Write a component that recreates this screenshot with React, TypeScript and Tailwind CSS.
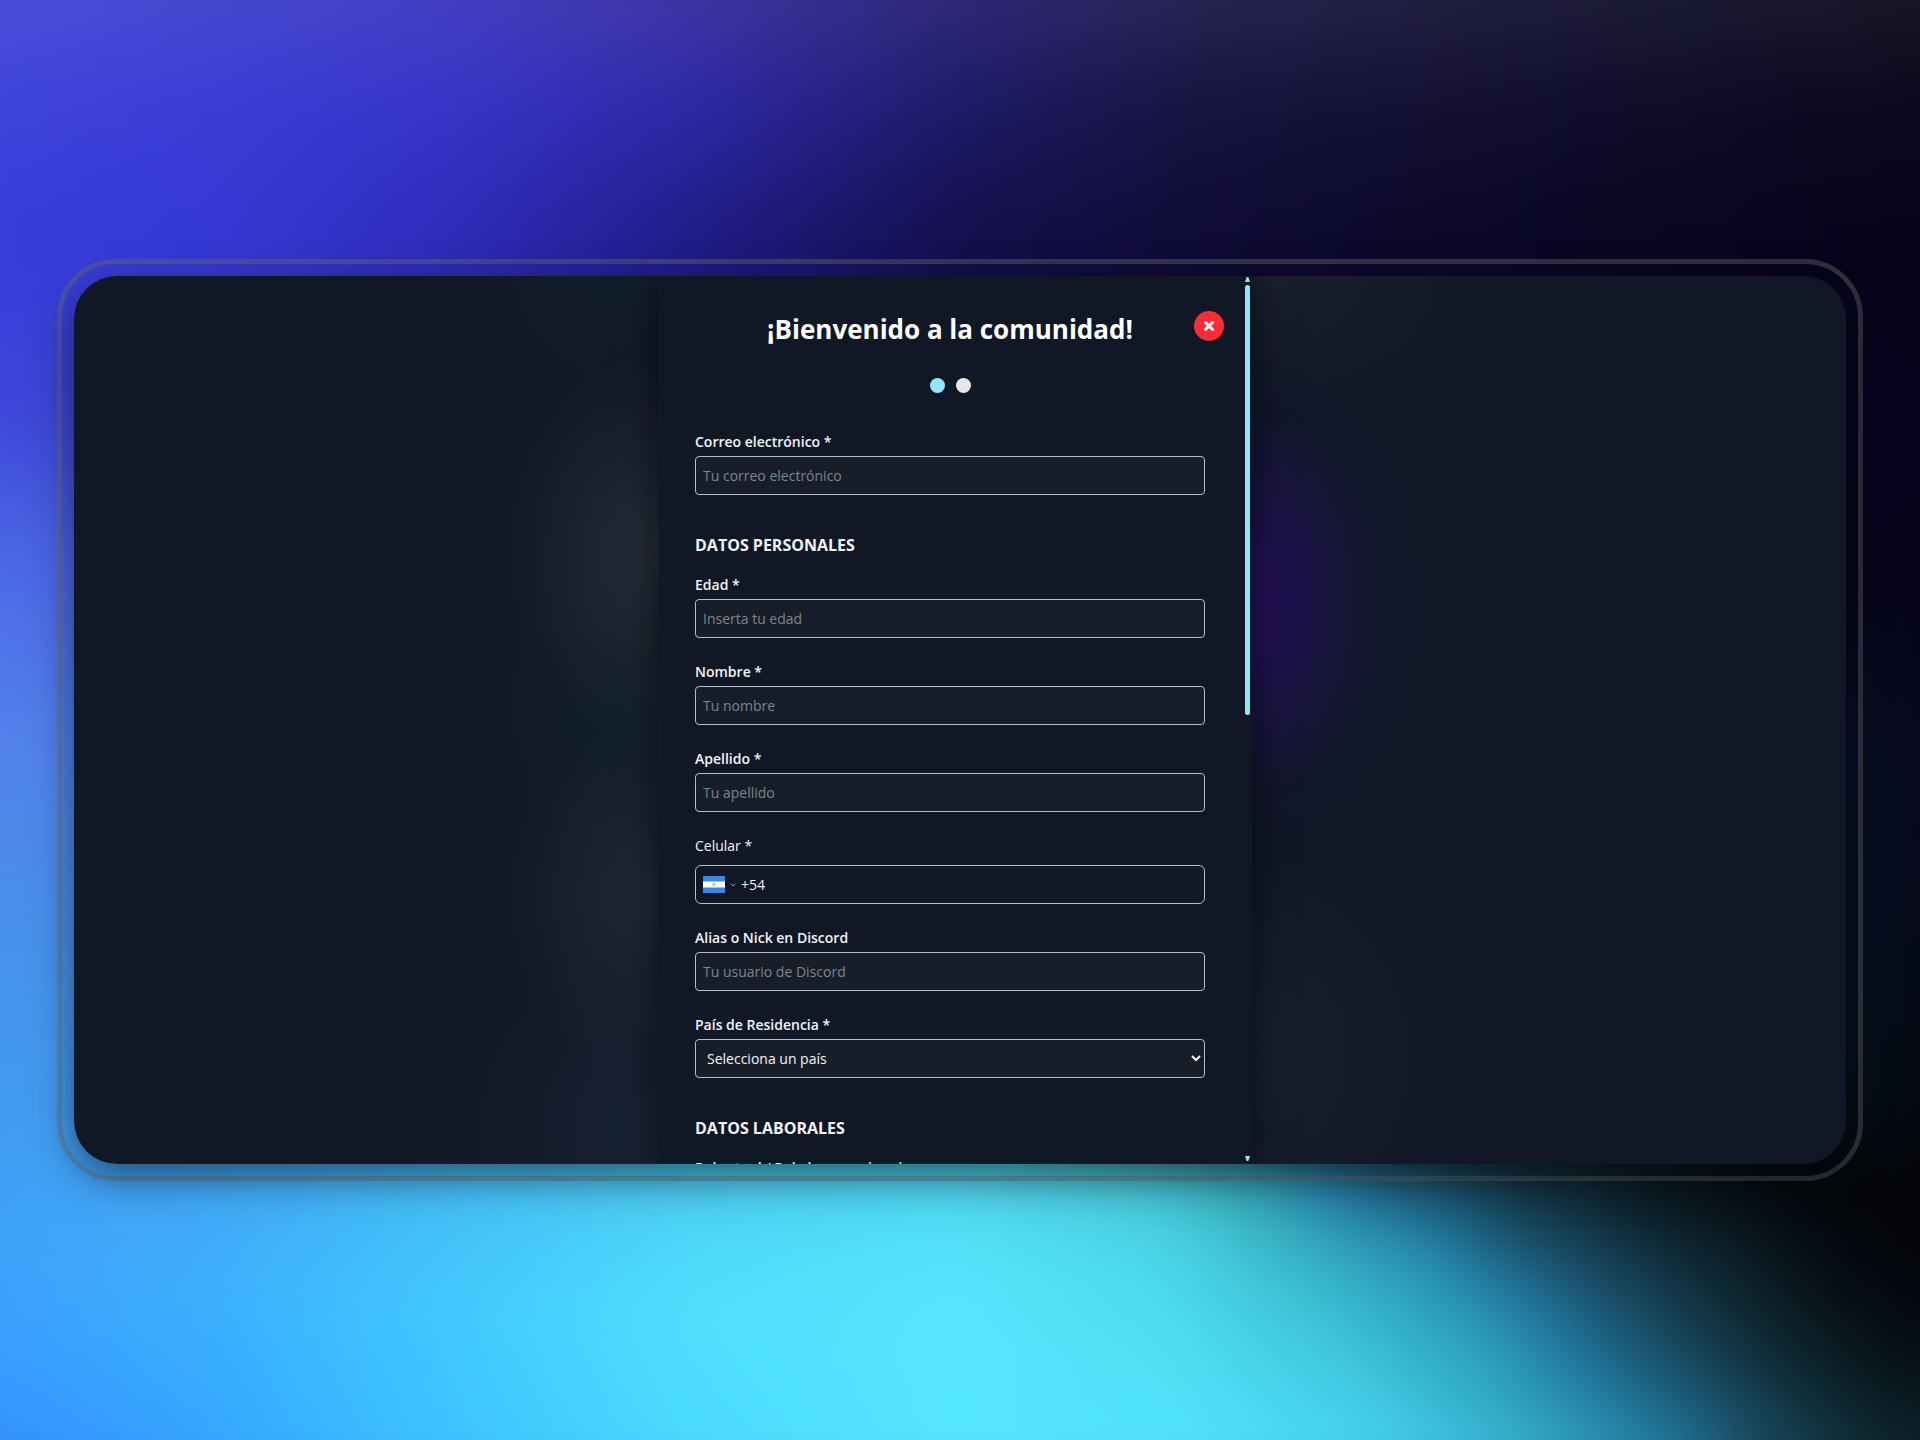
import React from "react";
import { ChevronDown, X } from "lucide-react";

type Band = { y: number; stops: string };

/* Horizontal colour bands of the wallpaper; each one fades in over the one above it. */
const bands: Band[] = [
  { y: 3, stops: "#4b50da 3%, #4648d0 14%, #4440c4 25%, #3f36a4 37%, #302979 50%, #292553 62%, #211f40 75%, #1b1a32 87%, #181727 97%" },
  { y: 10, stops: "#3f44db 3%, #3b3dd6 14%, #3735c9 25%, #2e29a6 37%, #1f1b68 50%, #17143f 62%, #131033 75%, #0e0c26 87%, #0b0a1d 97%" },
  { y: 19, stops: "#373ddb 3%, #3538d3 14%, #2e2bbb 25%, #1f1c85 37%, #140f4b 50%, #0f0b35 62%, #0b0828 75%, #080620 87%, #07051a 97%" },
  { y: 30, stops: "#3e4ae0 0%, #3a40c8 13%, #1f1c86 37%, #130f45 50%, #0b0828 75%, #06041c 100%" },
  { y: 40, stops: "#4f6cea 0%, #4860dc 13%, #1f1c86 37%, #0b0828 75%, #050318 100%" },
  { y: 52, stops: "#5585ee 0%, #4d7fe8 13%, #2c5aa0 50%, #050414 100%" },
  { y: 64, stops: "#4890ea 0%, #4893ea 13%, #2c6aa0 50%, #030310 100%" },
  { y: 76, stops: "#409aef 0%, #42a0f0 13%, #45bfe8 50%, #103040 75%, #030308 100%" },
  { y: 80, stops: "#3f9df8 0%, #42a8f5 14%, #45bdf2 25%, #4ccdf0 37%, #4fd2ea 50%, #45c2d0 59%, #33a4b1 64%, #2272a6 68%, #1a5169 72%, #112b38 78%, #081319 84%, #04060a 91%, #030306 99%" },
  { y: 84, stops: "#3f9ffb 0%, #40adfa 14%, #43c2fa 25%, #4dd8fa 37%, #54e3fa 50%, #49d4e6 60%, #35adbd 67%, #2582ae 73%, #1b5570 77%, #122f3e 83%, #09161d 89%, #04060c 94%, #030408 99%" },
  { y: 88, stops: "#3b9cfe 0%, #3db1fd 14%, #42c9fe 25%, #50dffe 37%, #57e6fd 50%, #4cdcf0 60%, #3abdd2 68%, #2ba2bb 73%, #247fac 77%, #1c5674 81%, #12333f 86%, #081319 92%, #04060c 98%" },
  { y: 92, stops: "#3798ff 0%, #38adff 14%, #3fc7ff 25%, #4eddff 37%, #57e7ff 50%, #50e1f6 60%, #40c8e0 69%, #2ca2bc 76%, #2379a5 80%, #1b5571 84%, #12323e 89%, #07141a 95%, #061016 99%" },
  { y: 97, stops: "#348fff 3%, #36a7ff 14%, #3dc3ff 25%, #4ad9ff 37%, #56e6ff 50%, #50e3fb 61%, #46d2ed 70%, #36b0cf 77%, #2a96b4 81%, #22739c 85%, #184b5e 89%, #102a34 94%, #0c2028 98%" },
];

function Wallpaper() {
  return (
    <div aria-hidden="true" className="absolute inset-0 scale-107 blur-xl">
      {bands.map((band, i) => {
        const fade =
          i === 0
            ? undefined
            : `linear-gradient(to bottom, transparent ${bands[i - 1].y}%, black ${band.y}%)`;
        return (
          <div
            key={band.y}
            className="absolute inset-0"
            style={{
              backgroundImage: `linear-gradient(to right, ${band.stops})`,
              maskImage: fade,
            }}
          />
        );
      })}
    </div>
  );
}

const boxClass =
  "block h-[39px] w-full rounded-[4px] border border-[#b8bcc3] px-[7px] text-[14px] text-gray-100 outline-none";

function Field({ id, label, placeholder, type = "text" }: { id: string; label: string; placeholder: string; type?: string }) {
  return (
    <div className="flex flex-col gap-1">
      <label htmlFor={id} className="text-[14px] leading-5 font-semibold">
        {label}
      </label>
      <input id={id} type={type} placeholder={placeholder} className={`${boxClass} bg-[#181e29] placeholder:text-[#7b848f]`} />
    </div>
  );
}

function Flag() {
  return (
    <svg viewBox="0 0 22 17" className="h-[17px] w-[22px] shrink-0" role="img" aria-label="Argentina">
      <rect width="22" height="17" fill="#3b86e6" />
      <rect y="5.5" width="22" height="6" fill="#fff" />
      <circle cx="11" cy="8.5" r="2" fill="#e8cf6a" />
    </svg>
  );
}

function ScrollRail() {
  return (
    <div aria-hidden="true" className="absolute top-0 right-[2px] bottom-0 flex w-[5px] flex-col items-center">
      <svg viewBox="0 0 6 6" className="mt-px h-[5px] w-[5px] shrink-0">
        <path d="M2 0h2L6 6H0z" fill="#93e6f8" />
      </svg>
      <div className="mt-[3px] h-[430px] w-full shrink-0 rounded-full bg-[#93e6f8]" />
      <svg viewBox="0 0 6 6" className="mt-auto mb-[3px] h-[5px] w-[5px] shrink-0">
        <path d="M0 0h6L4 6H2z" fill="#93e6e0" />
      </svg>
    </div>
  );
}

function SectionTitle({ children }: { children: React.ReactNode }) {
  return <h2 className="mt-3 -mb-2 text-[16px] leading-7 font-bold">{children}</h2>;
}

export default function App() {
  return (
    <main className="relative flex min-h-screen items-center overflow-hidden bg-[#07051a] px-[57px] font-['Open_Sans','Noto_Sans',sans-serif] text-[#f3f4f6]">
      <Wallpaper />
      <div className="relative w-full rounded-[58px] border-[5px] border-[#6e6e6e]/40 p-3">
        <div className="relative flex aspect-[1772/888] w-full justify-center overflow-hidden rounded-[43px] bg-linear-to-r from-[#111825] to-[#111727] pr-[10px] shadow-[0_14px_40px_rgba(0,0,0,0.5)]">
          <div
            aria-hidden="true"
            className="absolute inset-0 bg-[radial-gradient(150px_200px_at_580px_275px,#262d3a,transparent),radial-gradient(150px_190px_at_580px_620px,#222a38,transparent),radial-gradient(200px_190px_at_590px_850px,#182436,transparent),radial-gradient(190px_200px_at_590px_430px,#10202b,transparent),radial-gradient(190px_140px_at_590px_0px,#121f2c,transparent),radial-gradient(120px_190px_at_1165px_325px,#24105e,transparent),radial-gradient(190px_260px_at_1165px_325px,#17143c,transparent),radial-gradient(170px_200px_at_1190px_780px,#18202f,transparent),radial-gradient(200px_130px_at_1190px_0px,#19212d,transparent)]"
          />
          <section
            role="dialog"
            aria-labelledby="dialog-title"
            className="relative w-full max-w-[594px] overflow-hidden bg-[#101725] shadow-[0_0_36px_rgba(0,0,0,0.6)]"
          >
            <ScrollRail />
            <form className="flex flex-col gap-6 pt-8 pr-[47px] pl-[37px]" onSubmit={(e) => e.preventDefault()}>
              <header className="relative flex flex-col items-center">
                <h1 id="dialog-title" className="text-[26px] leading-[42px] font-bold text-white">
                  ¡Bienvenido a la comunidad!
                </h1>
                <button
                  type="button"
                  aria-label="Cerrar"
                  className="absolute top-[3px] -right-[19px] flex size-[30px] items-center justify-center rounded-full bg-[#fb2c36] text-white"
                >
                  <X className="size-[14px]" strokeWidth={5} />
                </button>
                <div className="mt-7 mb-[15px] flex gap-[11px]">
                  <span className="size-[15px] rounded-full bg-[#93e6f8]" />
                  <span className="size-[15px] rounded-full bg-[#e7e7e9]" />
                </div>
              </header>
              <Field id="correo" label="Correo electrónico *" placeholder="Tu correo electrónico" type="email" />
              <SectionTitle>DATOS PERSONALES</SectionTitle>
              <Field id="edad" label="Edad *" placeholder="Inserta tu edad" />
              <Field id="nombre" label="Nombre *" placeholder="Tu nombre" />
              <Field id="apellido" label="Apellido *" placeholder="Tu apellido" />
              <div className="flex flex-col gap-[9px]">
                <label htmlFor="celular" className="text-[14px] leading-5">
                  Celular *
                </label>
                <div className="flex h-[39px] items-center rounded-[6px] border border-[#b8bcc3] px-[7px]">
                  <button type="button" aria-label="Elegir código de país" className="flex items-center gap-1">
                    <Flag />
                    <ChevronDown className="size-2 text-gray-400" strokeWidth={3} />
                  </button>
                  <input
                    id="celular"
                    type="tel"
                    defaultValue="+54"
                    className="ml-1 min-w-0 flex-1 bg-transparent text-[14px] outline-none"
                  />
                </div>
              </div>
              <Field id="discord" label="Alias o Nick en Discord" placeholder="Tu usuario de Discord" />
              <div className="flex flex-col gap-1">
                <label htmlFor="pais" className="text-[14px] leading-5 font-semibold">
                  País de Residencia *
                </label>
                <select id="pais" className={`${boxClass} bg-[#181e29] pr-0`}>
                  <option>Selecciona un país</option>
                </select>
              </div>
              <SectionTitle>DATOS LABORALES</SectionTitle>
              <Field id="rol" label="Rol actual / Rol al que aspiras *" placeholder="Tu rol" />
            </form>
          </section>
        </div>
      </div>
    </main>
  );
}
